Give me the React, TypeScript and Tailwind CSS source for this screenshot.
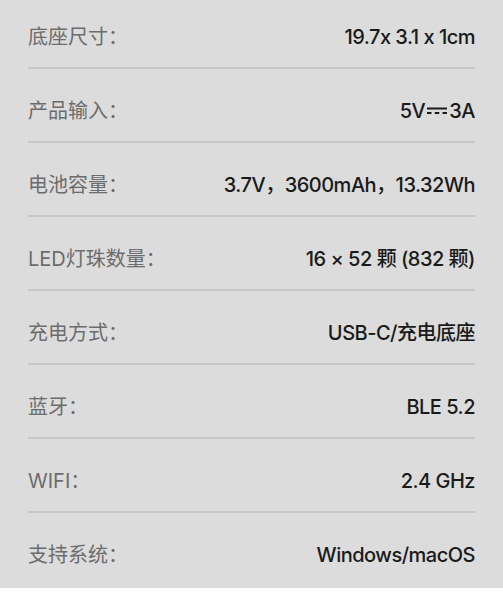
const SPECS: { label: string; value: React.ReactNode }[] = [
  { label: '底座尺寸：', value: '19.7x 3.1 x 1cm' },
  {
    label: '产品输入：',
    value: (
      <span className="inline-flex items-center">
        5V
        <svg viewBox="0 0 20 10" className="mx-[2px] h-[10px] w-[20px]" aria-hidden>
          <rect x="0" y="1.5" width="20" height="2" fill="currentColor" />
          <rect x="0" y="6" width="4.5" height="2" fill="currentColor" />
          <rect x="7.75" y="6" width="4.5" height="2" fill="currentColor" />
          <rect x="15.5" y="6" width="4.5" height="2" fill="currentColor" />
        </svg>
        3A
      </span>
    ),
  },
  { label: '电池容量：', value: '3.7V，3600mAh，13.32Wh' },
  { label: 'LED灯珠数量：', value: '16 × 52 颗 (832 颗)' },
  { label: '充电方式：', value: 'USB-C/充电底座' },
  { label: '蓝牙：', value: 'BLE 5.2' },
  { label: 'WIFI：', value: '2.4 GHz' },
  { label: '支持系统：', value: 'Windows/macOS' },
]

export default function App() {
  return (
    <div
      className="min-h-[593px] w-full bg-[#dcdcdc] px-[28px]"
      style={{ fontFamily: '"Inter", "Noto Sans CJK SC", sans-serif' }}
    >
      <div className="-mt-[5px] flex flex-col">
        {SPECS.map((s, i) => (
          <div
            key={s.label}
            className={
              'flex items-center justify-between pb-[16px] pt-[28px] leading-[28px] ' +
              (i < SPECS.length - 1 ? 'border-b-2 border-[#c7c7c7]' : '')
            }
          >
            <span className="text-[20px] text-[#6c6c6c]">{s.label}</span>
            <span className="text-[20px] font-medium tracking-[-0.5px] text-[#1a1a1a]">
              {s.value}
            </span>
          </div>
        ))}
      </div>
    </div>
  )
}
